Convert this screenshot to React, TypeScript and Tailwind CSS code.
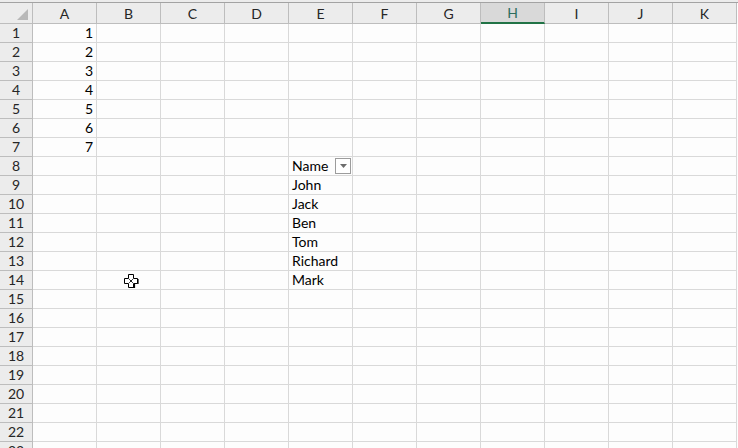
import { Fragment } from 'react';

const COLS = ['A', 'B', 'C', 'D', 'E', 'F', 'G', 'H', 'I', 'J', 'K'];
const ROWS = Array.from({ length: 23 }, (_, i) => i + 1);

const names: Record<number, string> = {
  8: 'Name',
  9: 'John',
  10: 'Jack',
  11: 'Ben',
  12: 'Tom',
  13: 'Richard',
  14: 'Mark',
};

function cellText(row: number, col: string) {
  if (col === 'A' && row <= 7) return String(row);
  if (col === 'E') return names[row] ?? '';
  return '';
}

function MoveCursor() {
  return (
    <svg width="16" height="16" viewBox="0 0 16 16" className="absolute left-[123px] top-[273px]">
      <path
        d="M5.5 1.5h5v4h4v5h-4v4h-5v-4h-4v-5h4z"
        fill="white"
        stroke="black"
        strokeWidth="1"
      />
      <path d="M6 14.5h5.5M11.5 11v4M15 6v5" stroke="black" strokeWidth="1.2" />
      <path d="M6.2 6.2l3.6 3.6M9.8 6.2l-3.6 3.6" stroke="black" strokeWidth="0.9" />
    </svg>
  );
}

export default function App() {
  return (
    <div className="relative w-[738px] h-[448px] overflow-hidden bg-[#fdfdfd] font-['Lato',sans-serif] text-[14px] text-black">
      <div className="h-[2px] bg-[#ececec]" />
      <div className="h-px bg-[#a3a3a3]" />
      <div className="grid grid-cols-[33px_repeat(11,64px)] grid-rows-[21px_repeat(23,19px)]">
        {/* header row */}
        <div className="relative bg-[#ececec] border-r border-b border-[#bdbdbd]">
          <svg width="11" height="11" viewBox="0 0 11 11" className="absolute right-[4px] bottom-[3px]">
            <path d="M11 0V11H0Z" fill="#b8b8b8" />
          </svg>
        </div>
        {COLS.map(c => (
          <div
            key={c}
            className={
              c === 'H'
                ? 'flex items-center justify-center bg-[#d9d9d9] border-r border-[#bdbdbd] border-b-2 border-b-[#217346] text-[#2d6e5e]'
                : 'flex items-center justify-center bg-[#ececec] border-r border-b border-[#bdbdbd] text-[#262626]'
            }
          >
            <span className="text-[14px] leading-none pt-[1px]">{c}</span>
          </div>
        ))}

        {ROWS.map(r => (
          <Fragment key={r}>
            <div className="flex items-center justify-center bg-[#ececec] border-r border-b border-[#bdbdbd] text-[#262626] leading-none">
              {r}
            </div>
            {COLS.map(c => {
              const text = cellText(r, c);
              return (
                <div
                  key={c}
                  className={
                    'relative flex items-center border-r border-b border-[#d9d9d9] px-[3px] leading-none whitespace-nowrap ' +
                    (c === 'A' ? 'justify-end' : 'justify-start')
                  }
                >
                  {text}
                  {c === 'E' && r === 8 && (
                    <div className="absolute right-[1px] top-[1px] w-[16px] h-[16px] border border-[#9c9c9c] bg-white flex items-center justify-center">
                      <svg width="7" height="4" viewBox="0 0 7 4">
                        <path d="M0 0H7L3.5 4Z" fill="#6d6d6d" />
                      </svg>
                    </div>
                  )}
                </div>
              );
            })}
          </Fragment>
        ))}
      </div>
      <MoveCursor />
    </div>
  );
}
